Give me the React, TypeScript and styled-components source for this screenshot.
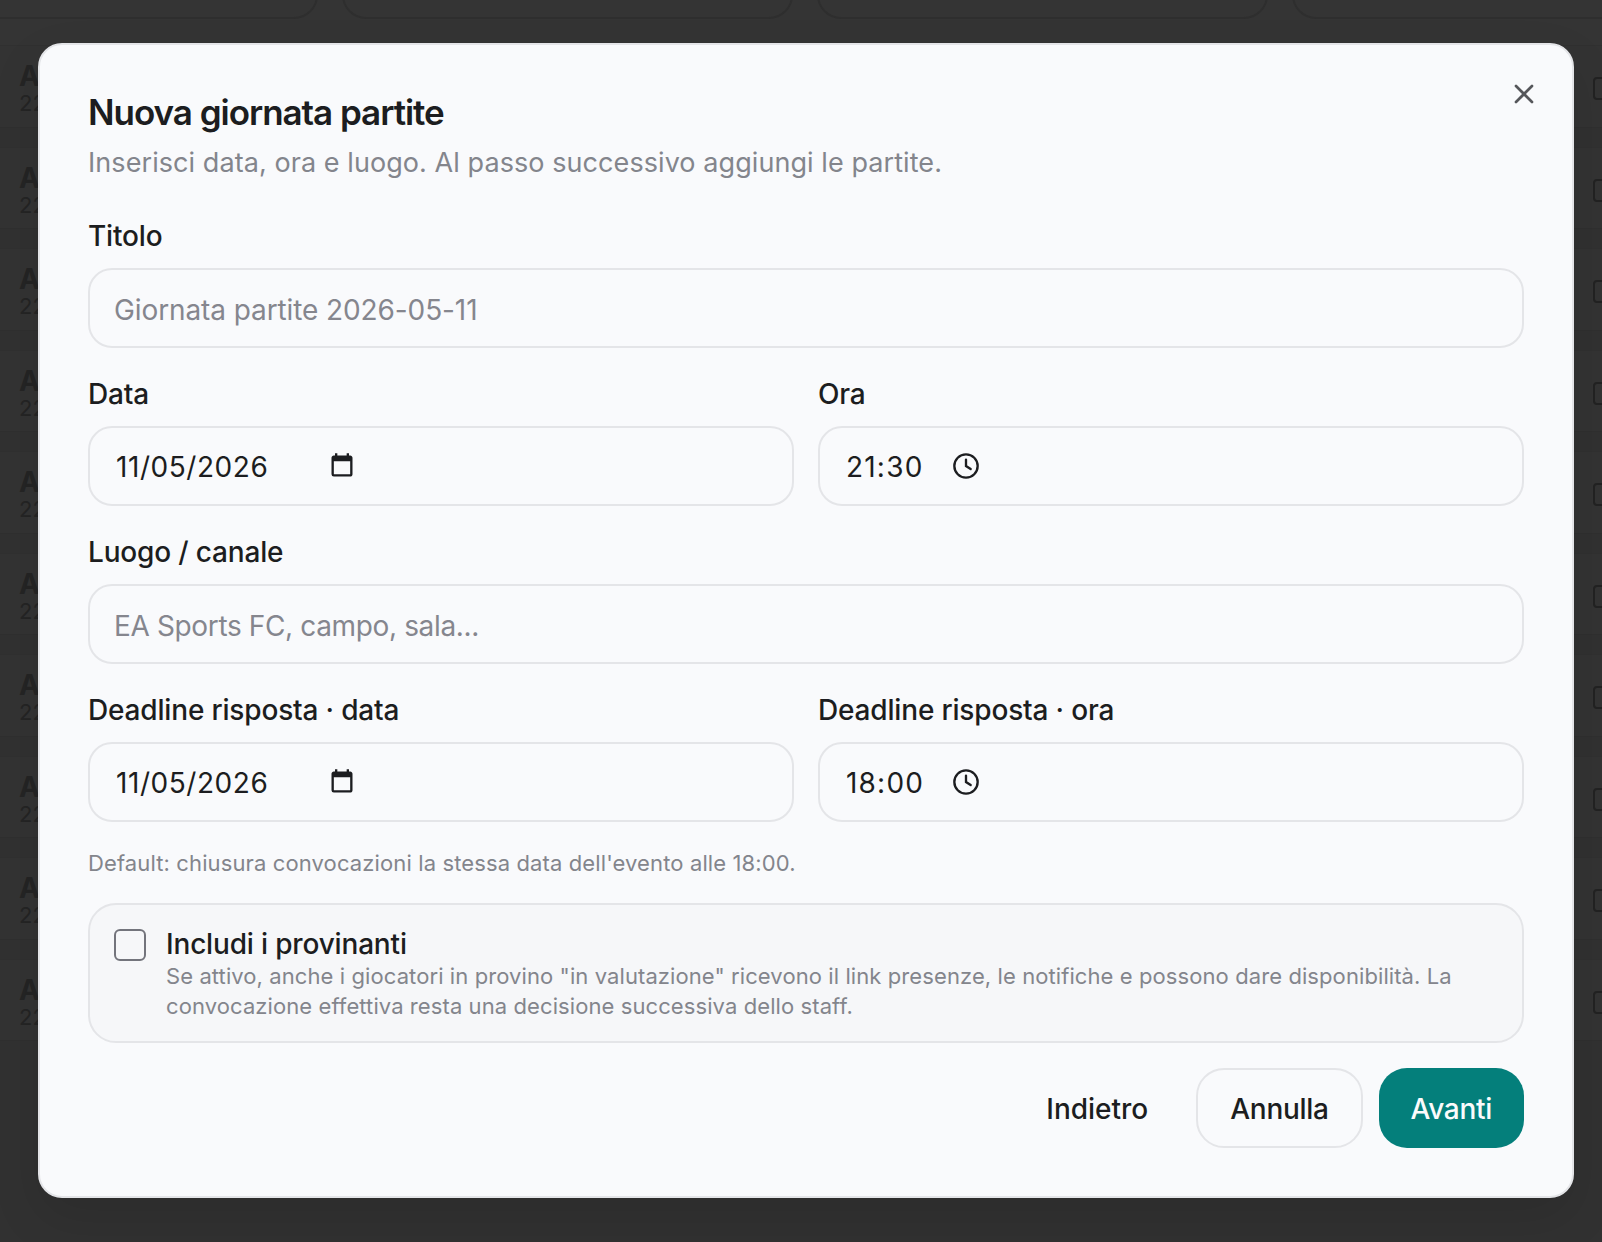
import React from "react";
import styled, { createGlobalStyle } from "styled-components";

const Global = createGlobalStyle`
  html, body { margin: 0; padding: 0; background: #313131; }
  body { font-family: Inter, "Liberation Sans", sans-serif; overflow: hidden; -webkit-font-smoothing: antialiased; }
  * { box-sizing: border-box; }
`;

const Page = styled.div`
  width: 1602px;
  height: 1242px;
  background: #313131;
  overflow: hidden;
  position: relative;
`;
const TopBand = styled.div`
  display: flex;
  align-items: flex-start;
  background: #343434;
  height: 45px;
`;
const TopCards = styled.div`
  display: flex;
  flex: none;
  gap: 24px;
  width: 1876px;
  margin: -60px 0 0 -133px;
  height: 79px;
`;
const TopCard = styled.div`
  flex: 1;
  border: 2px solid #2e2e2e;
  border-radius: 24px;
  background: #343434;
`;
const Rows = styled.div`
  display: flex;
  flex-direction: column;
  gap: 19px;
`;
const BgRow = styled.div`
  height: 82.5px;
  display: flex;
  align-items: center;
  justify-content: space-between;
  padding: 6px 0 0 19px;
  border-top: 1px solid #303030;
  border-bottom: 1px solid #2f2f2f;
  background: #333333;
  color: #242424;
`;
const BgTitle = styled.div`
  font-size: 28px;
  line-height: 28px;
  font-weight: 700;
`;
const BgSub = styled.div`
  font-size: 22px;
  line-height: 26px;
`;
const BgCheck = styled.div`
  width: 24px;
  height: 23px;
  margin: -1px -15px 0 0;
  border: 2px solid #222;
  border-radius: 4px;
`;
const Overlay = styled.div`
  position: absolute;
  inset: 0;
  display: flex;
  align-items: flex-start;
  justify-content: flex-start;
  padding: 43px 0 0 38px;
`;
const Modal = styled.div`
  position: relative;
  width: 1536px;
  height: 1155px;
  padding: 48px;
  background: #f9fafc;
  border: 2px solid #e4e5e8;
  border-radius: 24px;
  box-shadow: 0 20px 50px rgba(0, 0, 0, 0.1);
  color: #1c1d20;
`;
const Close = styled.button`
  position: absolute;
  top: 33px;
  right: 32px;
  width: 32px;
  height: 32px;
  padding: 0;
  border: 0;
  background: transparent;
  color: #55565a;
  display: flex;
  align-items: center;
  justify-content: center;
`;
const Title = styled.h2`
  margin: 1px 0 0;
  font-size: 35px;
  line-height: 36px;
  font-weight: 600;
  letter-spacing: -1.03px;
`;
const Subtitle = styled.p`
  margin: 13px 0 0;
  font-size: 27px;
  line-height: 40px;
  letter-spacing: 0.07px;
  color: #83858c;
`;
const Form = styled.div`
  display: flex;
  flex-direction: column;
  gap: 26px;
  margin-top: 33px;
`;
const Two = styled.div`
  display: grid;
  grid-template-columns: 1fr 1fr;
  gap: 24px;
`;
const Field = styled.div`
  display: flex;
  flex-direction: column;
  gap: 12px;
`;
const Label = styled.label`
  font-size: 28px;
  line-height: 40px;
  font-weight: 470;
  letter-spacing: -0.17px;
  color: #1c1d20;
`;
const TextInput = styled.input<{ $ls: number }>`
  height: 80px;
  width: 100%;
  padding: 3px 24px 0;
  border: 2px solid #e4e5e8;
  border-radius: 24px;
  background: transparent;
  font: inherit;
  font-size: 28px;
  letter-spacing: ${(p) => p.$ls}px;
  outline: none;
  &::placeholder { color: #85868e; opacity: 1; }
`;
const Picker = styled.div`
  height: 80px;
  display: flex;
  align-items: center;
  padding: 0 26px;
  border: 2px solid #e4e5e8;
  border-radius: 24px;
  font-size: 28px;
  color: #1c1d20;
`;
const PickerValue = styled.span<{ $w: number; $ls: number }>`
  width: ${(p) => p.$w}px;
  flex: none;
  margin-top: 2px;
  letter-spacing: ${(p) => p.$ls}px;
`;
const Hint = styled.p`
  margin: 25px 0 0;
  font-size: 22px;
  line-height: 32px;
  letter-spacing: 0.12px;
  color: #83858c;
`;
const Callout = styled.div`
  display: flex;
  gap: 20px;
  height: 140px;
  margin-top: 24px;
  padding: 24px;
  border: 2px solid #e4e5e8;
  border-radius: 28px;
  background: #f6f7f9;
`;
const Box = styled.span`
  flex: none;
  width: 32px;
  height: 32px;
  border: 2px solid #73747c;
  border-radius: 6px;
`;
const CalloutBody = styled.div`
  display: flex;
  flex-direction: column;
`;
const CalloutTitle = styled.span`
  font-size: 28px;
  line-height: 28px;
  font-weight: 470;
  letter-spacing: -0.17px;
  margin-top: 1px;
`;
const CalloutText = styled.span`
  font-size: 22px;
  line-height: 30px;
  letter-spacing: 0.09px;
  margin-top: 3px;
  color: #83858c;
`;
const Footer = styled.div`
  display: flex;
  justify-content: flex-end;
  gap: 16px;
  margin-top: 25px;
`;
const Btn = styled.button<{ $kind: "ghost" | "outline" | "primary" }>`
  height: 80px;
  padding: 2px ${(p) => (p.$kind === "outline" ? 32 : 30)}px 0;
  border-radius: 28px;
  font: inherit;
  font-size: 28px;
  font-weight: 470;
  letter-spacing: ${(p) => (p.$kind === "ghost" ? 0 : -0.3)}px;
  border: 2px solid ${(p) => (p.$kind === "outline" ? "#e4e5e8" : "transparent")};
  background: ${(p) => (p.$kind === "primary" ? "#047f7b" : "transparent")};
  color: ${(p) => (p.$kind === "primary" ? "#fbfbfb" : "#1c1d20")};
`;

const CloseIcon = () => (
  <svg width="32" height="32" viewBox="0 0 24 24" fill="none" stroke="currentColor" strokeWidth="2" strokeLinecap="round" strokeLinejoin="round">
    <path d="M18 6 6 18" />
    <path d="m6 6 12 12" />
  </svg>
);
const CalendarIcon = () => (
  <svg width="28" height="28" viewBox="0 0 24 24" fill="#1c1d20">
    <path d="M19 3h-1V1h-2v2H8V1H6v2H5c-1.11 0-2 .9-2 2v14a2 2 0 0 0 2 2h14c1.1 0 2-.9 2-2V5c0-1.1-.9-2-2-2zm0 16H5V8h14v11z" />
  </svg>
);
const ClockIcon = () => (
  <svg width="28" height="28" viewBox="0 0 24 24" fill="none" stroke="#1c1d20" strokeWidth="2">
    <circle cx="12" cy="12" r="10" />
    <path d="M12 6.5V12l4 2.6" strokeLinecap="round" />
  </svg>
);

const rowIds = [0, 1, 2, 3, 4, 5, 6, 7, 8, 9];

export default function App() {
  return (
    <Page>
      <Global />
      <TopBand>
        <TopCards>
          <TopCard />
          <TopCard />
          <TopCard />
          <TopCard />
        </TopCards>
      </TopBand>
      <Rows>
        {rowIds.map((i) => (
          <BgRow key={i}>
            <div>
              <BgTitle>A</BgTitle>
              <BgSub>22</BgSub>
            </div>
            <BgCheck />
          </BgRow>
        ))}
      </Rows>
      <Overlay>
        <Modal>
          <Close aria-label="Chiudi">
            <CloseIcon />
          </Close>
          <Title>Nuova giornata partite</Title>
          <Subtitle>Inserisci data, ora e luogo. Al passo successivo aggiungi le partite.</Subtitle>
          <Form>
            <Field>
              <Label>Titolo</Label>
              <TextInput $ls={-0.1} placeholder="Giornata partite 2026-05-11" />
            </Field>
            <Two>
              <Field>
                <Label>Data</Label>
                <Picker>
                  <PickerValue $w={212} $ls={0.55}>11/05/2026</PickerValue>
                  <CalendarIcon />
                </Picker>
              </Field>
              <Field>
                <Label>Ora</Label>
                <Picker>
                  <PickerValue $w={106} $ls={1.2}>21:30</PickerValue>
                  <ClockIcon />
                </Picker>
              </Field>
            </Two>
            <Field>
              <Label>Luogo / canale</Label>
              <TextInput $ls={-0.36} placeholder="EA Sports FC, campo, sala..." />
            </Field>
            <Two>
              <Field>
                <Label>Deadline risposta · data</Label>
                <Picker>
                  <PickerValue $w={212} $ls={0.55}>11/05/2026</PickerValue>
                  <CalendarIcon />
                </Picker>
              </Field>
              <Field>
                <Label>Deadline risposta · ora</Label>
                <Picker>
                  <PickerValue $w={106} $ls={1.2}>18:00</PickerValue>
                  <ClockIcon />
                </Picker>
              </Field>
            </Two>
          </Form>
          <Hint>Default: chiusura convocazioni la stessa data dell'evento alle 18:00.</Hint>
          <Callout>
            <Box />
            <CalloutBody>
              <CalloutTitle>Includi i provinanti</CalloutTitle>
              <CalloutText>
                Se attivo, anche i giocatori in provino "in valutazione" ricevono il link presenze, le notifiche e possono dare disponibilità. La convocazione effettiva resta una decisione successiva dello staff.
              </CalloutText>
            </CalloutBody>
          </Callout>
          <Footer>
            <Btn $kind="ghost">Indietro</Btn>
            <Btn $kind="outline">Annulla</Btn>
            <Btn $kind="primary">Avanti</Btn>
          </Footer>
        </Modal>
      </Overlay>
    </Page>
  );
}
